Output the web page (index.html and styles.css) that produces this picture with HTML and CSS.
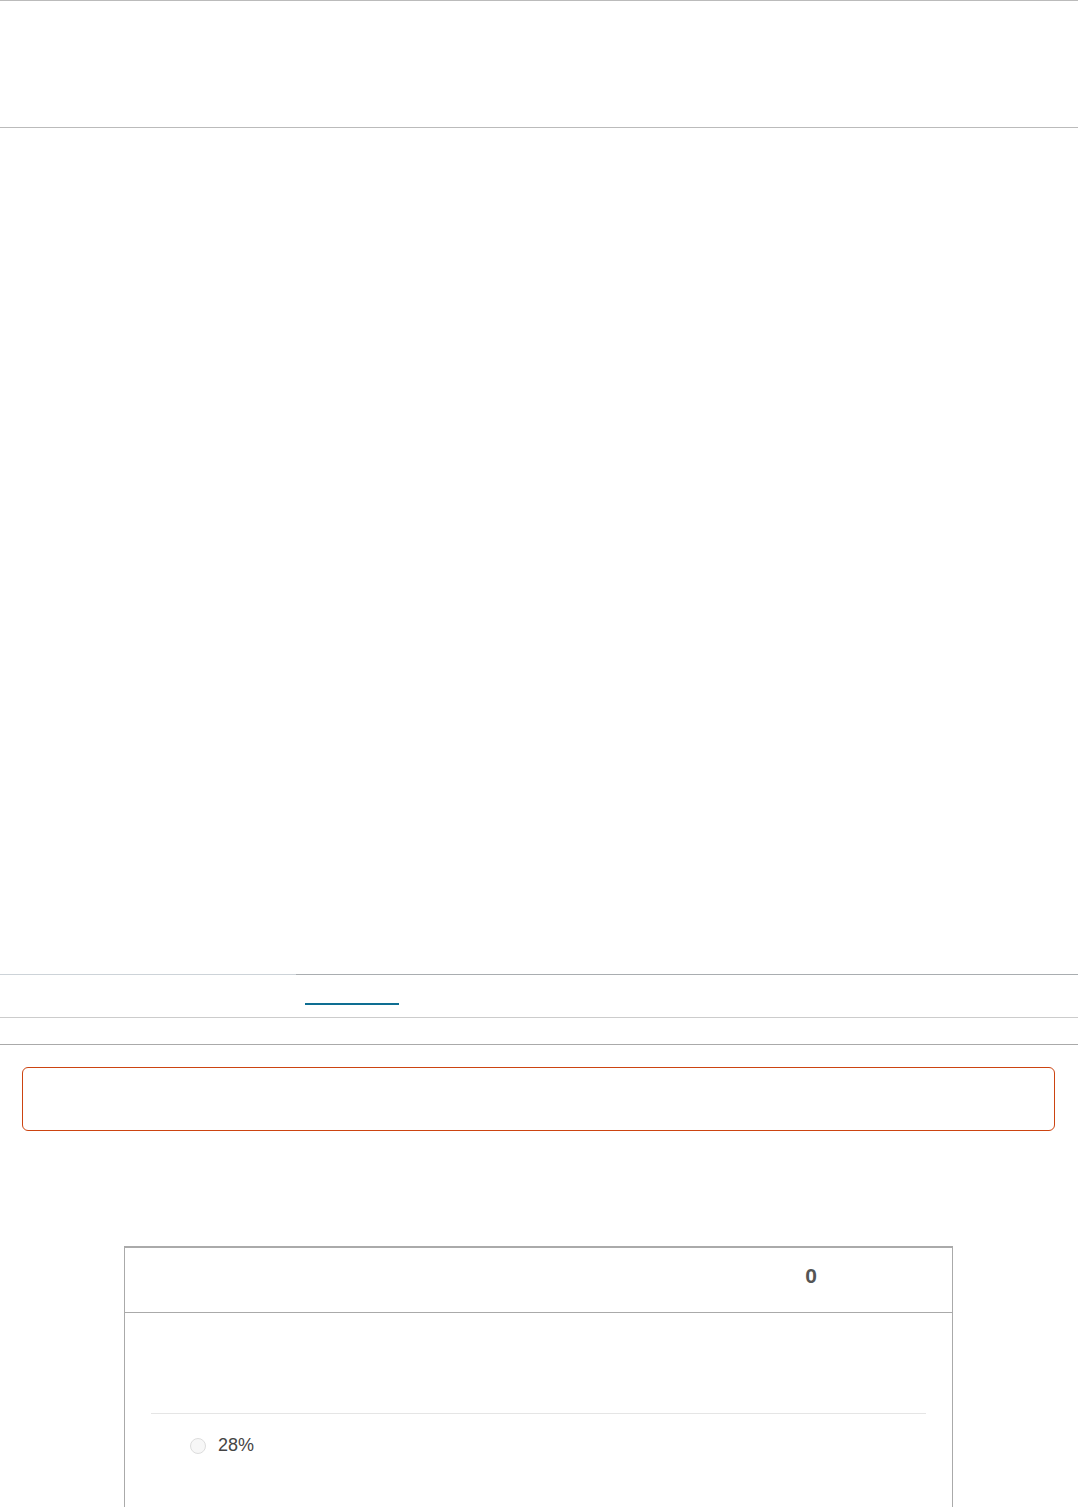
FILE: index.html
```html
<!DOCTYPE html>
<html>
<head>
  <meta charset="UTF-8" />
  <title>Poll</title>
  <link rel="stylesheet" href="styles.css">
</head>
<body>
<!-- Page header -->
<div class="header"></div>

<!-- Main content area (empty) -->
<div class="main"></div>

<!-- Tabs -->
<div class="tabs">
  <div class="tabs-side"></div>
  <div class="tabs-main">
    <a class="tab-link" href="#"></a>
  </div>
</div>
<div class="subbar"></div>

<!-- Alert box -->
<div class="alert"></div>

<!-- Poll table -->
<div class="poll">
  <div class="poll-head">
    <div class="poll-title"></div>
    <div class="poll-count">0</div>
  </div>
  <div class="poll-body">
    <div class="poll-question"></div>
    <label class="poll-option">
      <span class="radio"></span>
      <span class="option-text">28%</span>
    </label>
  </div>
</div>
</body>
</html>
```

FILE: styles.css
```css
body {
  margin: 0;
  font-family: "Liberation Sans", Arial, sans-serif;
  color: #444;
  background: #fff;
}
.header {
  height: 126px;
  border-top: 1px solid #bbb;
  border-bottom: 1px solid #bbb;
}
.main {
  height: 846px;
}
/* Tab bar */
.tabs {
  display: flex;
  height: 43px;
  border-bottom: 1px solid #ccc;
}
.tabs-side {
  width: 296px;
  border-top: 1px solid #cdd3d8;
}
.tabs-main {
  flex: 1;
  border-top: 1px solid #a9adb0;
  padding-left: 9px;
}
.tab-link {
  display: block;
  width: 94px;
  height: 28px;
  border-bottom: 2px solid #0e6e92;
}
.subbar {
  height: 26px;
  border-bottom: 1px solid #aaa;
}
.alert {
  margin: 22px 23px 0 22px;
  height: 62px;
  border: 1px solid #cc4411;
  border-radius: 6px;
}
/* Poll table */
.poll {
  margin: 115px 0 0 124px;
  width: 827px;
  border: 1px solid #aaa;
  border-top-width: 2px;
  border-bottom: none;
}
.poll-head {
  display: flex;
  height: 64px;
  border-bottom: 1px solid #aaa;
}
.poll-title {
  flex: 1;
}
.poll-count {
  width: 282px;
  text-align: center;
  font-size: 21px;
  font-weight: bold;
  color: #555;
  line-height: 55px;
}
.poll-body {
  padding: 0 26px;
  height: 194px;
}
.poll-question {
  height: 100px;
  border-bottom: 1px solid #e5e5e5;
}
.poll-option {
  display: flex;
  align-items: center;
  gap: 12px;
  padding: 21px 0 0 39px;
}
.radio {
  width: 14px;
  height: 14px;
  border: 1px solid #ddd;
  border-radius: 50%;
  background: #f7f7f7;
}
.option-text {
  font-size: 18px;
  color: #444;
}
```
